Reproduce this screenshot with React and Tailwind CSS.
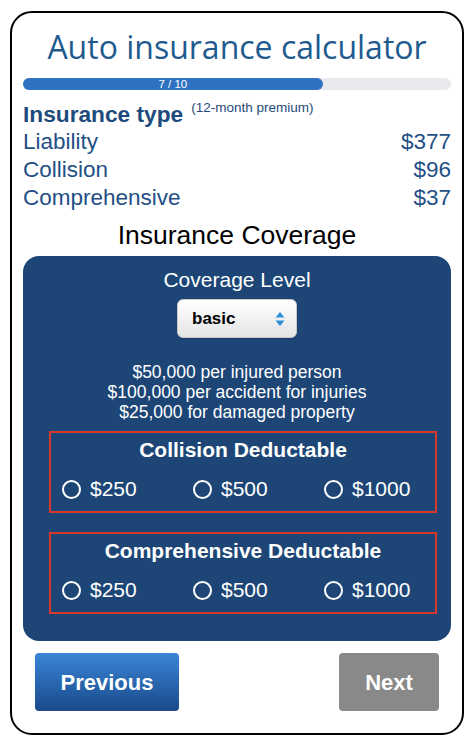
const premiums = [
  { name: 'Liability', price: '$377' },
  { name: 'Collision', price: '$96' },
  { name: 'Comprehensive', price: '$37' },
];

function Radio({ label, wide }) {
  return (
    <label className={`flex items-center gap-[9px] ${wide ? 'w-[131px]' : ''}`}>
      <span className="h-[19px] w-[19px] rounded-full border-2 border-white"></span>
      <span className="text-[21px] leading-[24px] text-white">{label}</span>
    </label>
  );
}

function Deductable({ title }) {
  return (
    <div className="ml-[26px] mr-[14px] border-2 border-[#d8392b] pb-[10px] pt-[5px]">
      <div className="text-center text-[21px] font-bold leading-[24px] text-white">{title}</div>
      <div className="mt-[15px] flex pl-[11px]">
        <Radio label="$250" wide />
        <Radio label="$500" wide />
        <Radio label="$1000" />
      </div>
    </div>
  );
}

export default function App() {
  return (
    <div className="min-h-screen bg-white pt-[11px]" style={{ fontFamily: '"Liberation Sans", Arial, sans-serif' }}>
      <div className="mx-[10px] w-[454px] rounded-[22px] border-2 border-black px-[11px] pb-[22px] pt-[14px]">
        <h1
          className="text-center text-[32px] leading-[40px] text-[#1f5b8f]"
          style={{ fontFamily: '"Open Sans", sans-serif' }}
        >
          Auto insurance calculator
        </h1>

        <div className="mt-[11px] flex h-[12px] rounded-full bg-[#e8e9ec]">
          <div className="flex w-[70%] items-center justify-center rounded-full bg-[#2f72c1] text-[11.5px] leading-[12px] text-white">
            7 / 10
          </div>
        </div>

        <div className="mt-[10px] flex items-start text-[#1e4a7c]">
          <span className="text-[22.7px] font-bold leading-[28px]">Insurance type</span>
          <span className="ml-[8px] text-[13.5px] leading-[16px]">(12-month premium)</span>
        </div>

        {premiums.map((p) => (
          <div key={p.name} className="flex justify-between text-[22.5px] leading-[28px] text-[#1f4f86]">
            <span>{p.name}</span>
            <span>{p.price}</span>
          </div>
        ))}

        <h2 className="mt-[7px] text-center text-[26.5px] leading-[32px] text-black">Insurance Coverage</h2>

        <div className="mt-[5px] rounded-[16px] bg-[#1d4677] pb-[27px] pt-[12px]">
          <div className="text-center text-[21px] leading-[24px] text-white">Coverage Level</div>

          <div className="mt-[7px] flex justify-center">
            <div className="flex h-[39px] w-[120px] items-center justify-between rounded-[6px] border border-[#c9c9c9] bg-gradient-to-b from-white to-[#e4e4e4] pl-[14px] pr-[11px] shadow-sm">
              <span className="text-[17px] font-bold text-black">basic</span>
              <svg width="10" height="16" viewBox="0 0 10 16">
                <path d="M5 1 L9.5 6.5 H0.5 Z" fill="#2f8fd5" />
                <path d="M5 15 L9.5 9.5 H0.5 Z" fill="#2f8fd5" />
              </svg>
            </div>
          </div>

          <div className="mt-[24px] text-center text-[17.5px] leading-[20px] text-white">
            <div>$50,000 per injured person</div>
            <div>$100,000 per accident for injuries</div>
            <div>$25,000 for damaged property</div>
          </div>

          <div className="mt-[9px]">
            <Deductable title="Collision Deductable" />
          </div>
          <div className="mt-[19px]">
            <Deductable title="Comprehensive Deductable" />
          </div>
        </div>

        <div className="mt-[12px] flex justify-between px-[12px]">
          <button className="h-[58px] w-[144px] rounded-[4px] bg-gradient-to-b from-[#3a86d8] to-[#1a4a8a] text-[22px] font-bold text-white">
            Previous
          </button>
          <button className="h-[58px] w-[100px] rounded-[4px] bg-[#898989] text-[22px] font-bold text-white">
            Next
          </button>
        </div>
      </div>
    </div>
  );
}
